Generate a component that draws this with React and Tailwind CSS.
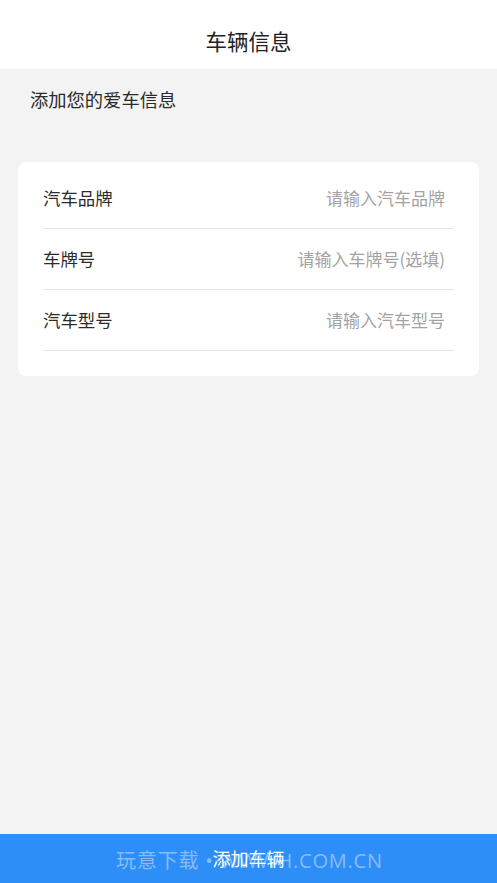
const cjk = { fontFamily: '"Noto Sans CJK SC", "Noto Sans", sans-serif' };

const fields = [
  { label: '汽车品牌', placeholder: '请输入汽车品牌' },
  { label: '车牌号', placeholder: '请输入车牌号(选填)' },
  { label: '汽车型号', placeholder: '请输入汽车型号' },
];

export default function App() {
  return (
    <div className="flex h-[883px] w-[497px] flex-col bg-[#f3f3f3]" style={cjk}>
      <header className="flex h-[69px] shrink-0 items-center justify-center bg-white pt-[13px]">
        <h1 className="text-[21.5px] text-[#222]">车辆信息</h1>
      </header>

      <main className="flex-1">
        <p className="px-[30px] pt-[17px] text-[18.3px] leading-[26px] text-[#2a2a2a]">添加您的爱车信息</p>

        <div className="mx-[18px] mt-[50px] rounded-lg bg-white pb-[25px] pl-[25px] pr-[25px] pt-[6px]">
          {fields.map((f) => (
            <div
              key={f.label}
              className="flex h-[61px] items-center justify-between border-b border-[#e3e3e3] pr-[9px]"
            >
              <span className="text-[17.4px] text-[#2b2b2b]">{f.label}</span>
              <input
                className="w-[200px] bg-transparent text-right text-[17px] text-[#333] outline-none placeholder:text-[#a3a3a3]"
                placeholder={f.placeholder}
              />
            </div>
          ))}
        </div>
      </main>

      <button className="relative flex h-[49px] shrink-0 items-center justify-center bg-[#2e8ef8]">
        <span
          className="pointer-events-none absolute inset-0 flex items-center justify-center pl-[2px] pt-[5px] text-[20px] tracking-[0.8px] text-[#c6ddf7]/60"
          style={{ fontFamily: '"Open Sans", "Noto Sans CJK SC", sans-serif' }}
        >
          玩意下载 • WWWH.COM.CN
        </span>
        <span className="relative text-[18px] text-white">添加车辆</span>
      </button>
    </div>
  );
}
